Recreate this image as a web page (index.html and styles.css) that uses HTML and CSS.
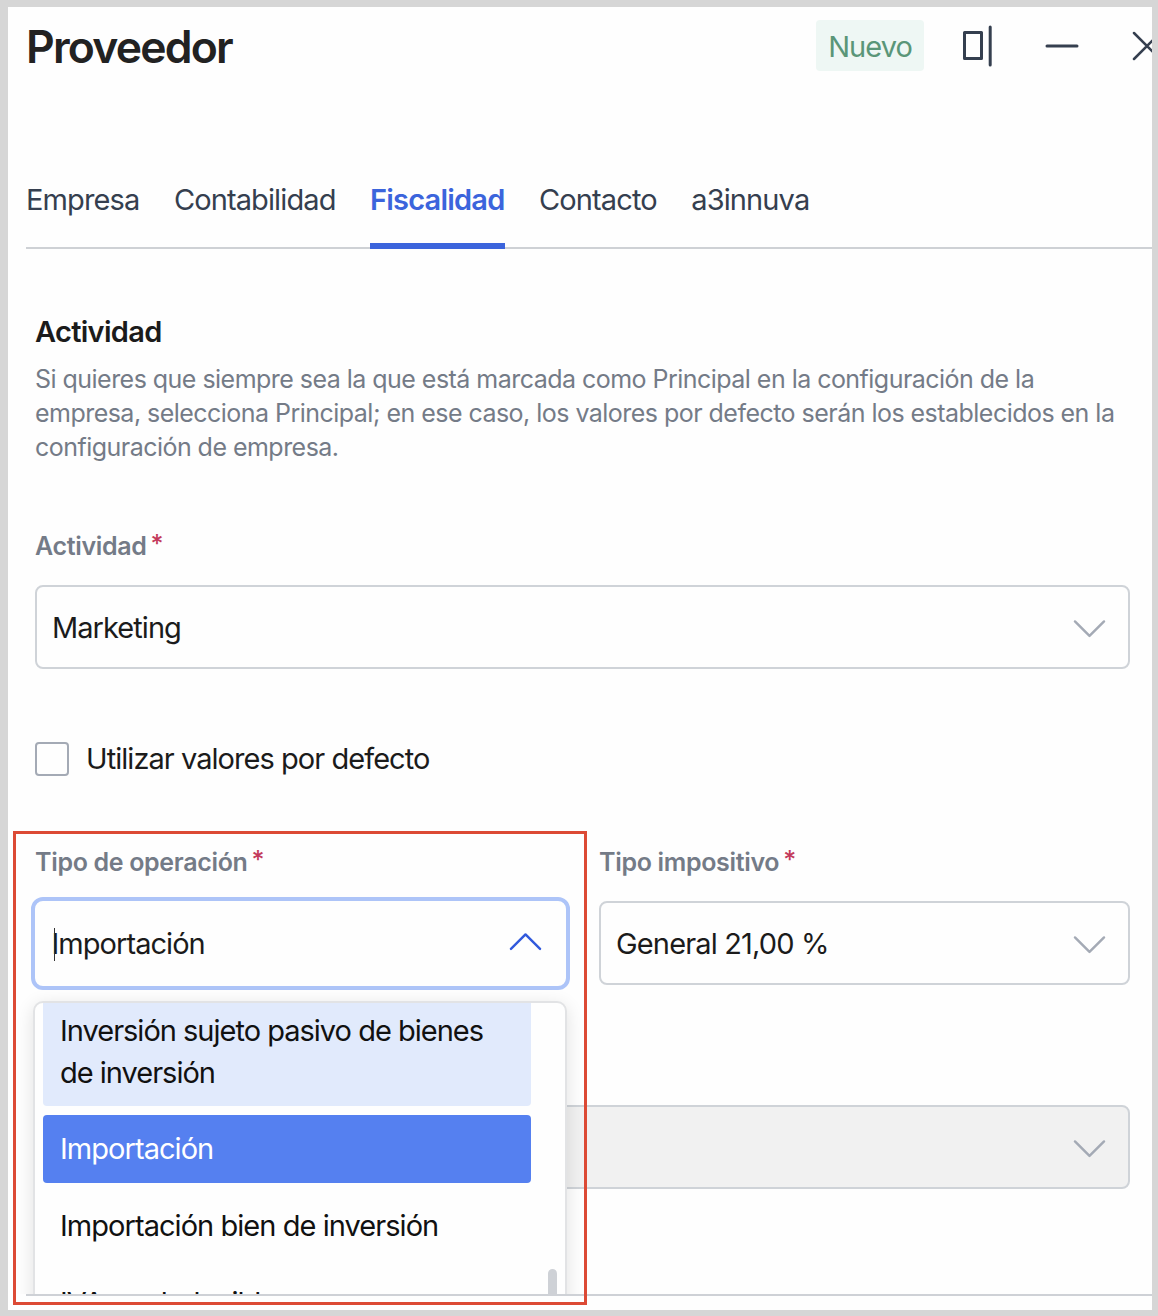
FILE: index.html
```html
<!DOCTYPE html>
<html lang="es">
<head>
<meta charset="utf-8">
<title>Proveedor</title>
<link rel="stylesheet" href="styles.css">
</head>
<body>
<main class="panel">
  <header class="header">
    <h1 class="title">Proveedor</h1>
    <span class="badge">Nuevo</span>
    <svg class="icon icon-dock" viewBox="0 0 32 44"><rect x="2.5" y="8.5" width="17" height="26"/><path d="M28.2 3v38"/></svg>
    <svg class="icon icon-min" viewBox="0 0 34 8"><path d="M2 4h30"/></svg>
    <svg class="icon icon-close" viewBox="0 0 30 30"><path d="M2 2l26 26M28 2L2 28"/></svg>
  </header>
  <nav class="tabs">
    <a class="tab">Empresa</a>
    <a class="tab">Contabilidad</a>
    <a class="tab tab-active">Fiscalidad</a>
    <a class="tab">Contacto</a>
    <a class="tab">a3innuva</a>
  </nav>
  <section class="content">
    <h2 class="section-title">Actividad</h2>
    <p class="help">Si quieres que siempre sea la que está marcada como Principal en la configuración de la<br>empresa, selecciona Principal; en ese caso, los valores por defecto serán los establecidos en la<br>configuración de empresa.</p>
    <div class="field field-activity">
      <label class="label">Actividad<span class="req">*</span></label>
      <div class="select"><span>Marketing</span><svg class="chev" viewBox="0 0 34 20"><path d="M2 2.5l15 15 15-15"/></svg></div>
    </div>
    <div class="check-row"><span class="checkbox"></span><span class="check-label">Utilizar valores por defecto</span></div>
    <div class="columns">
      <div class="field">
        <label class="label">Tipo de operación<span class="req">*</span></label>
        <div class="select select-focus"><i class="caret"></i><span>Importación</span><svg class="chev" viewBox="0 0 34 20"><path d="M2 17.5l15-15 15 15"/></svg></div>
        <div class="menu">
          <div class="option option-hover">Inversión sujeto pasivo de bienes<br>de inversión</div>
          <div class="option option-selected">Importación</div>
          <div class="option">Importación bien de inversión</div>
          <div class="option">IVA no deducible</div>
          <i class="thumb"></i>
        </div>
      </div>
      <div class="field">
        <label class="label">Tipo impositivo<span class="req">*</span></label>
        <div class="select"><span class="rate">General 21,00 %</span><svg class="chev" viewBox="0 0 34 20"><path d="M2 2.5l15 15 15-15"/></svg></div>
      </div>
    </div>
    <div class="select select-disabled"><svg class="chev" viewBox="0 0 34 20"><path d="M2 2.5l15 15 15-15"/></svg></div>
  </section>
  <footer class="footer"></footer>
  <div class="highlight"></div>
</main>
</body>
</html>
```

FILE: styles.css
```css
* { box-sizing: border-box; }
body {
  margin: 0;
  height: 1316px;
  padding: 7px 6px 6px 8px;
  background: #d6d6d6;
  font-family: Inter, "Liberation Sans", sans-serif;
  font-size: 29px;
  letter-spacing: -0.95px;
  color: #1b1b1b;
  overflow: hidden;
}
.panel {
  position: relative;
  height: 1303px;
  background: #fefefe;
  overflow: hidden;
  display: flex;
  flex-direction: column;
}
.header {
  flex: none;
  height: 78px;
  padding-left: 18px;
  display: flex;
  align-items: center;
}
.title {
  margin: 1px auto 0 0;
  font-size: 44.5px;
  line-height: 50px;
  font-weight: 600;
  letter-spacing: -1.8px;
  color: #222;
}
.badge {
  flex: none;
  width: 108px;
  height: 51px;
  margin-top: -1px;
  line-height: 53px;
  border-radius: 4px;
  text-align: center;
  background: #eef7f4;
  color: #5a9678;
}
.icon { flex: none; fill: none; stroke: #353f4f; stroke-width: 3; stroke-linecap: round; stroke-linejoin: round; }
.icon-dock { width: 32px; height: 44px; margin-left: 38px; }
.icon-min { width: 34px; height: 8px; margin-left: 51px; }
.icon-close { width: 30px; height: 30px; margin: 0 -10px 0 53px; stroke-width: 2.5; }

.tabs {
  flex: none;
  height: 107px;
  margin: 57px 0 0 18px;
  border-bottom: 2px solid #ced1d5;
  display: flex;
  gap: 34.5px;
}
.tab { color: #353f4f; line-height: 34px; padding-top: 40.5px; white-space: nowrap; letter-spacing: -0.88px; }
.tab-active {
  color: #3b64dc;
  font-weight: 600;
  letter-spacing: -0.8px;
  height: 107px;
  border-bottom: 6px solid #3b64dc;
}

.content {
  flex: none;
  height: 1045px;
  padding: 65px 22px 0 27px;
  overflow: hidden;
}
.section-title { margin: 0; font-size: 29px; line-height: 36px; font-weight: 600; letter-spacing: -0.7px; }
.help { margin: 12px 0 0; font-size: 25px; line-height: 34px; letter-spacing: -0.53px; color: #747b87; white-space: nowrap; }
.field { position: relative; }
.field-activity { margin-top: 64px; }
.label { display: block; font-size: 25px; line-height: 36px; font-weight: 600; letter-spacing: -0.33px; color: #747b87; margin-bottom: 21px; }
.req { position: relative; top: -2px; color: #c33a5b; margin-left: 4px; font-weight: 500; }
.select {
  height: 84px;
  border: 2px solid #cfd3d8;
  border-radius: 8px;
  padding: 0 22px 0 15px;
  display: flex;
  align-items: center;
  justify-content: space-between;
}
.chev { width: 33px; height: 19.4px; margin-top: 3px; fill: none; stroke: #a4aab5; stroke-width: 2.5; stroke-linecap: round; stroke-linejoin: round; }
.check-row { display: flex; align-items: center; gap: 17px; margin-top: 72px; height: 35px; }
.checkbox { width: 34px; height: 34px; border: 2px solid #a4aab5; border-radius: 4px; }
.check-label { line-height: 34px; padding-top: 1px; }
.columns { display: grid; grid-template-columns: 530px 531px; column-gap: 34px; margin-top: 68px; }
.rate { letter-spacing: -0.85px; }
.select-focus {
  margin: -4px -4.5px;
  height: 93px;
  border: 4px solid #adc4f8;
  border-radius: 12px;
  padding: 0 24px 0 17px;
  position: relative;
}
.select-focus .chev { stroke: #3159dc; margin-top: -3px; }
.caret { position: absolute; left: 19px; top: 27px; width: 1px; height: 33px; background: #333; }
.select-disabled { margin-top: 119px; background: #f1f1f1; justify-content: flex-end; }

.menu {
  position: absolute;
  z-index: 2;
  left: -2px;
  top: 157px;
  width: 534px;
  height: 360px;
  border: 2px solid #e2e3e5;
  border-radius: 10px;
  background: #fefefe;
  box-shadow: 0 4px 18px rgba(0, 0, 0, .12);
  overflow: hidden;
  padding: 0 34px 0 8px;
}
.option { padding: 13px 17px; line-height: 42px; border-radius: 4px; margin-bottom: 9px; color: #111; white-space: nowrap; }
.option-hover { background: #e1eafc; padding-top: 7px; padding-bottom: 11.5px; border-radius: 0 0 4px 4px; letter-spacing: -1px; }
.option-selected { background: #5580f0; color: #fff; }
.thumb { position: absolute; right: 8px; top: 266px; width: 9px; height: 80px; border-radius: 5px; background: #ced1d6; }

.footer { flex: none; height: 16px; margin-left: 18px; border-top: 2px solid #ced1d6; }
.highlight {
  position: absolute;
  z-index: 3;
  left: 5px;
  top: 824px;
  width: 574px;
  height: 474px;
  border: 3px solid #dc4a35;
  pointer-events: none;
}
```
